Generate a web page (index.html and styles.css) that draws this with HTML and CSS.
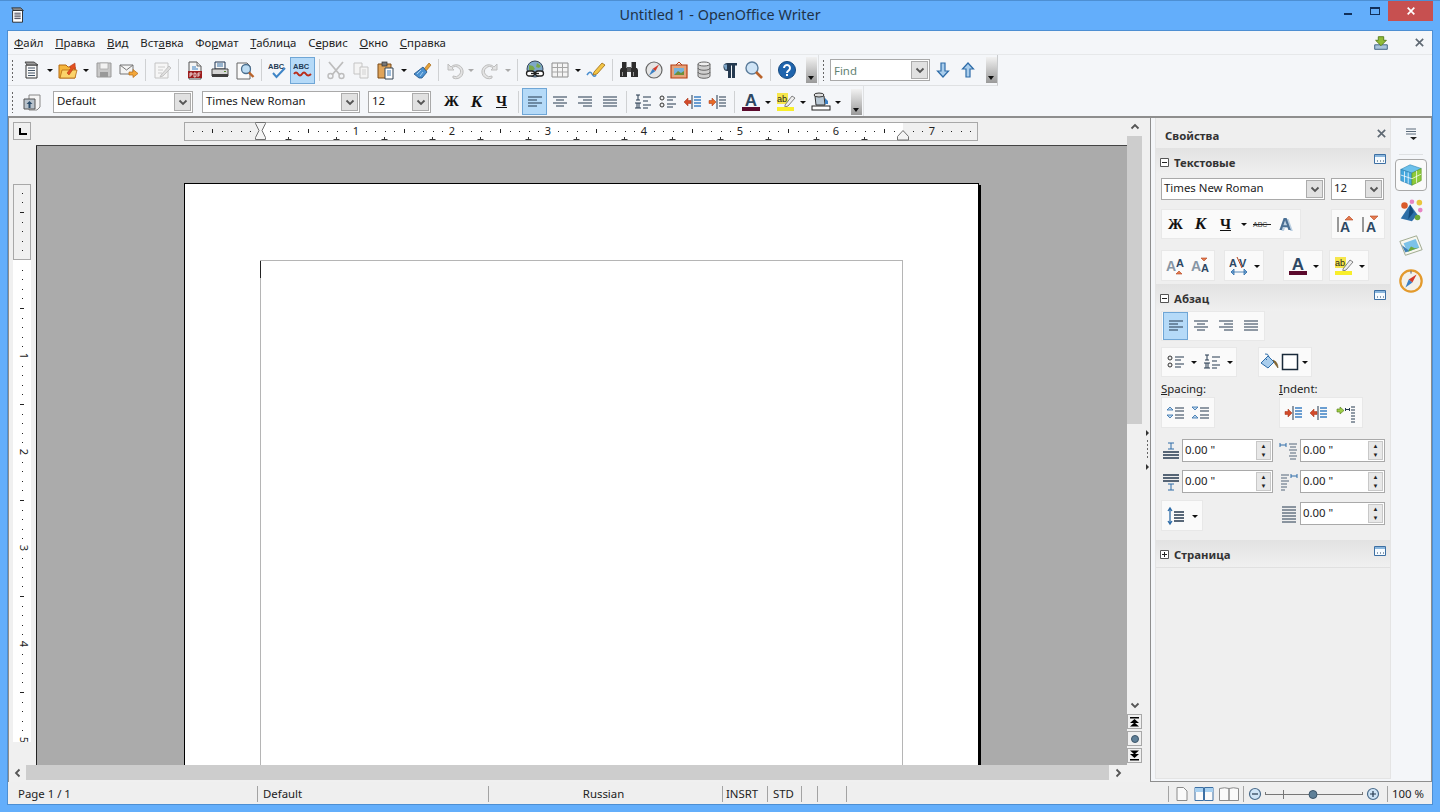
FILE: index.html
```html
<!DOCTYPE html>
<html lang="ru">
<head>
<meta charset="utf-8">
<title>Untitled 1 - OpenOffice Writer</title>
<link rel="stylesheet" href="styles.css">
</head>
<body>
<svg class="defs" xmlns="http://www.w3.org/2000/svg">
  <pattern id="tickh" width="96" height="18" patternUnits="userSpaceOnUse" x="260" y="0">
    <g fill="#222"><rect x="10" y="9" width="1" height="1"/><rect x="19" y="9" width="1" height="1"/><rect x="29" y="9" width="1" height="1"/><rect x="38" y="9" width="1" height="1"/><rect x="48" y="7" width="1" height="4"/><rect x="58" y="9" width="1" height="1"/><rect x="67" y="9" width="1" height="1"/><rect x="77" y="9" width="1" height="1"/><rect x="86" y="9" width="1" height="1"/></g>
  </pattern>
  <pattern id="tickv" width="18" height="96" patternUnits="userSpaceOnUse" x="0" y="18">
    <g fill="#222"><rect x="9" y="10" width="1" height="1"/><rect x="9" y="19" width="1" height="1"/><rect x="9" y="29" width="1" height="1"/><rect x="9" y="38" width="1" height="1"/><rect x="7" y="48" width="4" height="1"/><rect x="9" y="58" width="1" height="1"/><rect x="9" y="67" width="1" height="1"/><rect x="9" y="77" width="1" height="1"/><rect x="9" y="86" width="1" height="1"/></g>
  </pattern>
  <symbol id="arr" viewBox="0 0 8 20"><path d="M1 9h6l-3 3z" fill="#111"/></symbol>
  <symbol id="arrg" viewBox="0 0 8 20"><path d="M1 9h6l-3 3z" fill="#aaa"/></symbol>
  <symbol id="chev" viewBox="0 0 10 10"><path d="M1.500 3.500 5 7l3.500-3.500" fill="none" stroke="#555" stroke-width="1.800"/></symbol>
  <symbol id="xmark" viewBox="0 0 12 12"><path d="M2 2l8 8M10 2l-8 8" fill="none" stroke="#5f6973" stroke-width="1.800"/></symbol>
  <symbol id="xwhite" viewBox="0 0 12 12"><path d="M2 2l8 8M10 2l-8 8" fill="none" stroke="#fff" stroke-width="2"/></symbol>
  <symbol id="navup" viewBox="0 0 11 11"><path d="M1 1h9v1.500H1zM5.500 3 10 7H1zM5.500 6.500 10 10.500H1z" fill="#000"/></symbol>
  <symbol id="navdn" viewBox="0 0 11 11"><path d="M1 9h9v1.500H1zM5.500 8 10 4H1zM5.500 4.500 10 .5H1z" fill="#000"/></symbol>
  <symbol id="appdoc" viewBox="0 0 20 20"><path d="M4 5h11v13H4z" fill="#fff" stroke="#222"/><path d="M3 2h10l3 3H5z" fill="#8a8a8a" stroke="#222" stroke-width=".8"/><path d="M6 8h7M6 10h7M6 12h7M6 14h7" stroke="#334"/></symbol>
  <symbol id="new" viewBox="0 0 20 20"><path d="M4 5h11v13H4z" fill="#f8f8f8" stroke="#333"/><path d="M3 2h9l4 3H5z" fill="#9a9a9a" stroke="#333" stroke-width=".8"/><path d="M6 8h7M6 10.500h7M6 13h7M6 15.500h7" stroke="#456"/></symbol>
  <symbol id="open" viewBox="0 0 20 20"><path d="M1 5h7l2 2h7v11H1z" fill="#f6b73c" stroke="#b56a10"/><path d="M2 18 4 10h15l-2 8z" fill="#fbd36a" stroke="#b56a10" stroke-width=".8"/><path d="M9 13 13 8 11.500 6.500 17 3 17.500 9.500 15.500 8.500 11 15z" fill="#e3501f" stroke="#a83010" stroke-width=".5"/></symbol>
  <symbol id="save" viewBox="0 0 20 20"><path d="M3 3h14v14H3z" fill="#c8c8c8" stroke="#9a9a9a"/><path d="M6 3h8v6H6z" fill="#f2f2f2" stroke="#aaa" stroke-width=".8"/><path d="M6 12h8v5H6z" fill="#999"/></symbol>
  <symbol id="mail" viewBox="0 0 20 20"><path d="M1 5h13v9H1z" fill="#f4f4f4" stroke="#777"/><path d="M1 5l6.500 5L14 5" fill="none" stroke="#777"/><path d="M10 12h4V9.500l5 4-5 4V15h-4z" fill="#f3a73a" stroke="#b46a15" stroke-width=".7"/></symbol>
  <symbol id="edit" viewBox="0 0 20 20"><path d="M3 3h13v15H3z" fill="#f6f6f6" stroke="#c4c4c4"/><path d="M6 7h7M6 10h5M6 13h4" stroke="#ccc"/><path d="M9 15l8-9 2 2-8 8-3 1z" fill="#dedede" stroke="#bbb" stroke-width=".8"/></symbol>
  <symbol id="pdf" viewBox="0 0 20 20"><path d="M4 2h8l4 4v13H4z" fill="#f4f4f4" stroke="#555"/><path d="M12 2v4h4" fill="#ddd" stroke="#555" stroke-width=".8"/><path d="M7 7h4M7 9h6" stroke="#3b7fc0" stroke-width="1.200"/><path d="M3 11h14v7H3z" fill="#9c1d1d"/><path d="M5 13v4M5 13h2v2H5M9 13v4h1.500l.5-1v-2l-.5-1zM13 13v4M13 13h2.500M13 15h2" stroke="#fff" stroke-width=".8" fill="none"/></symbol>
  <symbol id="print" viewBox="0 0 20 20"><path d="M5 2h10v7H5z" fill="#f6f6f6" stroke="#1d3350"/><path d="M7 4h6M7 6h6" stroke="#3973a8"/><path d="M2 9h16v7H2z" fill="#d6d6d6" stroke="#444"/><path d="M2 14h16v3H2z" fill="#3e3e3e"/><rect x="14" y="11" width="2" height="1" fill="#5a8a33"/></symbol>
  <symbol id="preview" viewBox="0 0 20 20"><path d="M2 3h10l3 3v13H2z" fill="#fafafa" stroke="#666"/><circle cx="11" cy="9" r="4.500" fill="#bcdcf3" stroke="#4b6f8f" stroke-width="1.300"/><path d="M14 12.500 18.500 17" stroke="#b9622a" stroke-width="2.400"/></symbol>
  <symbol id="cut" viewBox="0 0 20 20"><path d="M3 2l11 13M17 2 6 15" stroke="#bdbdbd" stroke-width="1.800" fill="none"/><circle cx="4.500" cy="16" r="2.500" fill="none" stroke="#bdbdbd" stroke-width="1.400"/><circle cx="15.500" cy="16" r="2.500" fill="none" stroke="#bdbdbd" stroke-width="1.400"/></symbol>
  <symbol id="copy" viewBox="0 0 20 20"><path d="M3 3h8v11H3z" fill="#f4f4f4" stroke="#c4c4c4"/><path d="M9 7h8v11H9z" fill="#f4f4f4" stroke="#c4c4c4"/><path d="M11 10h4M11 12h4M11 14h4" stroke="#d2d2d2"/></symbol>
  <symbol id="paste" viewBox="0 0 20 20"><path d="M2 4h13v14H2z" fill="#dfa45a" stroke="#7a4a16"/><rect x="6" y="2" width="5" height="4" fill="#777" stroke="#333" stroke-width=".7"/><path d="M9 8h8v11H9z" fill="#fff" stroke="#345"/><path d="M11 11h4M11 13h4M11 15h4" stroke="#3a78b5"/></symbol>
  <symbol id="brush" viewBox="0 0 20 20"><path d="M12 9 17 3l2 2-5 6z" fill="#e6a33b" stroke="#a4691b" stroke-width=".7"/><path d="M11 7l4 5-5 6H7L2 14z" fill="#4a90cf" stroke="#1e4f84" stroke-width=".8"/><path d="M5 14l4-4M8 16l3-4" stroke="#a9d0f0"/></symbol>
  <symbol id="undo" viewBox="0 0 20 20"><path d="M3 4v6h6L7 8a5 5 0 1 1 1 8v2a7 7 0 1 0-2-11z" fill="#e3e3e3" stroke="#bdbdbd"/></symbol>
  <symbol id="redo" viewBox="0 0 20 20"><path d="M17 4v6h-6l2-2a5 5 0 1 0-1 8v2a7 7 0 1 1 2-11z" fill="#e3e3e3" stroke="#bdbdbd"/></symbol>
  <symbol id="link" viewBox="0 0 20 20"><circle cx="10" cy="9" r="8" fill="#7fa8c8" stroke="#37475a"/><path d="M4 5l4 1 2 3-3 2-3-1zM12 3l4 3-2 2-3-1z" fill="#79a84a"/><rect x="1.500" y="11" width="8" height="5" rx="2.500" fill="#fff" stroke="#222" stroke-width="1.300"/><rect x="10.500" y="11" width="8" height="5" rx="2.500" fill="#fff" stroke="#222" stroke-width="1.300"/><path d="M6 13.500h8" stroke="#222" stroke-width="1.300"/></symbol>
  <symbol id="table" viewBox="0 0 20 20"><path d="M2 3h16v14H2z" fill="#f4f4f4" stroke="#8c8c8c"/><path d="M2 7.500h16M2 12h16M7.500 3v14M12.500 3v14" stroke="#a6a6a6"/></symbol>
  <symbol id="draw" viewBox="0 0 20 20"><path d="M1 15q3-5 5-1t4 1" fill="none" stroke="#4a8ed0" stroke-width="1.600"/><path d="M8 12 16 3l3 2-8 9-4 1z" fill="#f3c545" stroke="#9a6a14" stroke-width=".8"/></symbol>
  <symbol id="find" viewBox="0 0 20 20"><path d="M2 8h6v9H1V10zM12 8h6l1 2v7h-7z" fill="#2d2d2d"/><rect x="3" y="2" width="4.500" height="7" fill="#2d2d2d"/><rect x="12.500" y="2" width="4.500" height="7" fill="#2d2d2d"/><rect x="8" y="7" width="4" height="5" fill="#555"/><path d="M3.500 12v4M14.500 12v4" stroke="#999"/></symbol>
  <symbol id="nav" viewBox="0 0 20 20"><circle cx="10" cy="10" r="8" fill="#e4e4e4" stroke="#666" stroke-width="1.200"/><path d="M15 4.500 11.500 11 8.500 9z" fill="#d23b2a"/><path d="M5 15.500 8.500 9 11.500 11z" fill="#3c80c4"/></symbol>
  <symbol id="gallery" viewBox="0 0 20 20"><path d="M2 5h16v13H2z" fill="#e5a37a" stroke="#b53f15" stroke-width="1.200"/><path d="M5 8h10v7H5z" fill="#76b3dc"/><path d="M5 15l4-4 3 2 3-2v4z" fill="#6e8f3a"/><path d="M7 5l3-3 3 3" fill="none" stroke="#b53f15"/></symbol>
  <symbol id="db" viewBox="0 0 20 20"><path d="M4 4v12c0 3 12 3 12 0V4z" fill="#cfcfcf" stroke="#666"/><ellipse cx="10" cy="4" rx="6" ry="2" fill="#efefef" stroke="#666"/><path d="M4 8c0 3 12 3 12 0M4 12c0 3 12 3 12 0" fill="none" stroke="#666"/></symbol>
  <symbol id="pil" viewBox="0 0 20 20"><path d="M8 3h10v2.500h-2V18h-3V5.500h-1V18H9v-7a4 4 0 0 1-1-8z" fill="#24394f"/><path d="M4.500 4.500H8v5H6z" fill="#7ea6c8"/></symbol>
  <symbol id="zoom" viewBox="0 0 20 20"><circle cx="8" cy="8" r="6" fill="#cfe4f6" stroke="#5b7c9b" stroke-width="1.400"/><path d="M12 12l6 6" stroke="#b9622a" stroke-width="2.600"/></symbol>
  <symbol id="help" viewBox="0 0 20 20"><circle cx="10" cy="10" r="8.500" fill="#1f64ad" stroke="#174a80"/><path d="M7 8a3 3 0 1 1 4.500 2.600c-1 .6-1.500 1-1.500 2.400" fill="none" stroke="#fff" stroke-width="2"/><rect x="9" y="14" width="2" height="2" fill="#fff"/></symbol>
  <symbol id="down" viewBox="0 0 20 20"><path d="M8 3h4v8h3.500L10 17l-5.500-6H8z" fill="#a9cdec" stroke="#2e6ca8" stroke-width="1.200"/></symbol>
  <symbol id="up" viewBox="0 0 20 20"><path d="M8 17h4V9h3.500L10 3 4.500 9H8z" fill="#a9cdec" stroke="#2e6ca8" stroke-width="1.200"/></symbol>
  <symbol id="style" viewBox="0 0 20 20"><path d="M7 3h11v12l-3 3H7z" fill="#f5f5f5" stroke="#888"/><path d="M2 7h11v10H2z" fill="#b9c3cc" stroke="#555"/><path d="M7.500 9l-3 3h2v4h2v-4h2z" fill="#2e4f6d"/></symbol>
  <symbol id="al" viewBox="0 0 20 20"><path d="M3 5h14M3 8h9M3 11h14M3 14h9" stroke="#24394f" stroke-width="1.200"/></symbol>
  <symbol id="ac" viewBox="0 0 20 20"><path d="M3 5h14M6 8h8M3 11h14M6 14h8" stroke="#24394f" stroke-width="1.200"/></symbol>
  <symbol id="ar" viewBox="0 0 20 20"><path d="M3 5h14M8 8h9M3 11h14M8 14h9" stroke="#24394f" stroke-width="1.200"/></symbol>
  <symbol id="aj" viewBox="0 0 20 20"><path d="M3 5h14M3 8h14M3 11h14M3 14h14" stroke="#24394f" stroke-width="1.200"/></symbol>
  <symbol id="num" viewBox="0 0 20 20"><path d="M3 3h4M5 3v5M3 8h4M2 11h6M4 11v5M6 11v5M2 16h6" stroke="#24394f" fill="none"/><path d="M10 5h8M10 9h5M10 13h8M10 16h5" stroke="#24394f" stroke-width="1.200"/></symbol>
  <symbol id="bul" viewBox="0 0 20 20"><circle cx="4" cy="6" r="2" fill="#eee" stroke="#333"/><circle cx="4" cy="13" r="2" fill="#eee" stroke="#333"/><path d="M9 5h9M9 8h6M9 12h9M9 15h6" stroke="#24394f" stroke-width="1.200"/></symbol>
  <symbol id="outd" viewBox="0 0 20 20"><path d="M9 3v14" stroke="#24394f"/><path d="M11 5h7M11 8h7M11 11h7M11 14h7" stroke="#3c80c4" stroke-width="1.300"/><path d="M1 10l4-4v2.500h3v3H5V14z" fill="#d24a2a" stroke="#a33015" stroke-width=".5"/></symbol>
  <symbol id="ind" viewBox="0 0 20 20"><path d="M9 3v14" stroke="#24394f"/><path d="M11 5h7M11 8h7M11 11h7M11 14h7" stroke="#24394f" stroke-width="1.200"/><path d="M8 10 4 6v2.500H1v3h3V14z" fill="#e86a25" stroke="#a33015" stroke-width=".5"/></symbol>
  <symbol id="indb" viewBox="0 0 20 20"><path d="M9 3v14" stroke="#24394f"/><path d="M11 5h7M11 8h7M11 11h7M11 14h7" stroke="#3c80c4" stroke-width="1.300"/><path d="M8 10 4 6v2.500H1v3h3V14z" fill="#d24a2a" stroke="#a33015" stroke-width=".5"/></symbol>
  <symbol id="bg" viewBox="0 0 20 20"><path d="M4 4h9l1 9H5z" fill="#b9c8d4" stroke="#333"/><ellipse cx="8" cy="3" rx="5" ry="2" fill="#ddd" stroke="#333"/><path d="M14 6l3 3v3h-3z" fill="#3c80c4"/><rect x="1" y="14" width="18" height="4" fill="#fff" stroke="#222"/></symbol>
  <symbol id="ext" viewBox="0 0 20 20"><path d="M3 12h14v5H3z" fill="#a8c4dc" stroke="#345a7c"/><path d="M7 3h6v4h3l-6 6-6-6h3z" fill="#8fbb37" stroke="#557a1a"/></symbol>
  <symbol id="fill" viewBox="0 0 20 20"><path d="M1 11 8 4l6 6-6 6z" fill="#a9cdec" stroke="#2e6ca8"/><path d="M5 2q3-1 4 3M6 7l1 1" fill="none" stroke="#2e6ca8"/><path d="M13 8q5 2 5 8l-3-4z" fill="#8c6a30" stroke="#5a4010" stroke-width=".5"/></symbol>
  <symbol id="box" viewBox="0 0 20 20"><rect x="2.500" y="2.500" width="15" height="15" fill="#fff" stroke="#1a2a3a" stroke-width="1.500"/></symbol>
  <symbol id="sp1" viewBox="0 0 20 20"><path d="M1 7l3-3 3 3zM1 12l3 3 3-3z" fill="#bfd8ee" stroke="#2e6ca8" stroke-width=".8"/><path d="M9 5h9M9 8h9M9 12h9M9 15h9" stroke="#24394f" stroke-width="1.100"/></symbol>
  <symbol id="sp2" viewBox="0 0 20 20"><path d="M1 4l3 3 3-3zM1 15l3-3 3 3z" fill="#bfd8ee" stroke="#2e6ca8" stroke-width=".8"/><path d="M9 5h9M9 8h9M9 12h9M9 15h9" stroke="#24394f" stroke-width="1.100"/></symbol>
  <symbol id="hang" viewBox="0 0 20 20"><path d="M1 6h3V4l4 3.500L4 11V9H1z" fill="#9ccd45" stroke="#557a1a" stroke-width=".6"/><path d="M9.500 5v3M9.500 6.500h4M13.500 5v3" stroke="#24394f" fill="none"/><path d="M15 4h4M15 7h4M15 10h4M15 13h4M15 16h4M15 19h4" stroke="#24394f"/></symbol>
  <symbol id="lnb" viewBox="0 0 20 20"><path d="M7 2h6M10 2v6M7 8h6" stroke="#2e6ca8" fill="none"/><path d="M2 11h16M2 14h16M2 17h16" stroke="#24394f" stroke-width="1.400"/></symbol>
  <symbol id="lna" viewBox="0 0 20 20"><path d="M2 3h16M2 6h16M2 9h16" stroke="#24394f" stroke-width="1.400"/><path d="M7 12h6M10 12v6M7 18h6" stroke="#2e6ca8" fill="none"/></symbol>
  <symbol id="ibefore" viewBox="0 0 20 20"><path d="M1 4h6M1 2v4M7 2v4" stroke="#2e6ca8" fill="none"/><path d="M10 3h8M11 6h6M10 9h8M11 12h6M10 15h8M11 18h6" stroke="#55667a" stroke-width="1.200"/></symbol>
  <symbol id="iafter" viewBox="0 0 20 20"><path d="M2 3h8M2 6h6M2 9h8M2 12h6M2 15h6M2 18h4" stroke="#55667a" stroke-width="1.200"/><path d="M12 4h6M12 2v4M18 2v4" stroke="#2e6ca8" fill="none"/></symbol>
  <symbol id="lsp" viewBox="0 0 20 20"><path d="M4 3v14M2 5l2-3 2 3M2 15l2 3 2-3" fill="none" stroke="#2e6ca8" stroke-width="1.300"/><path d="M8 6h10M8 9h10M8 12h10M8 15h10" stroke="#24394f" stroke-width="1.300"/></symbol>
  <symbol id="pgsp" viewBox="0 0 20 20"><path d="M3 3h14M3 6h14M3 9h14" stroke="#24394f"/><path d="M3 12h14M3 15h14M3 18h14" stroke="#24394f"/></symbol>
  <symbol id="optn" viewBox="0 0 12 12"><path d="M.5 1.500h11v9H.5z" fill="#f6fbff" stroke="#3c6fa3"/><path d="M1 2h10v2H1z" fill="#8ab6dd"/><path d="M3 8h1M6 8h1M9 8h1" stroke="#25466b"/></symbol>
  <symbol id="tprop" viewBox="0 0 28 28"><path d="M3 8 13 3l12 4-10 5z" fill="#6cc1ec" stroke="#3a8db8" stroke-width=".7"/><path d="M3 8l12 4v13L3 20z" fill="#45a8de" stroke="#2b7fb0" stroke-width=".7"/><path d="M15 12l10-5v13l-10 5z" fill="#8ecb3a" stroke="#5d9620" stroke-width=".7"/><path d="M7 10v12M11 11.300v12M3 14l12 4M20 9.500v13M15 18l10-5" stroke="#fff" stroke-width=".8"/></symbol>
  <symbol id="tstyle" viewBox="0 0 28 28"><path d="M3 22 13 7l8 11-6 7z" fill="#2e6fa8"/><path d="M13 7l4 8-6 8z" fill="#124a7c"/><circle cx="7" cy="8" r="3.500" fill="#d95a2a"/><circle cx="15" cy="4" r="2.500" fill="#e785c4"/><circle cx="23" cy="5" r="3" fill="#e9c63d"/><circle cx="24" cy="13" r="2.500" fill="#e785c4"/><circle cx="21" cy="21" r="3" fill="#6ea83a"/></symbol>
  <symbol id="tgal" viewBox="0 0 28 28"><path d="M2 9 20 3l6 15-18 6z" fill="#f7f7ef" stroke="#9aa58a"/><path d="M6 11 19 6.500l4 9.500-13 4.500z" fill="#7cc2e8"/><path d="M10 20.500l4-6 4 2 5-1z" fill="#6ea83a"/><path d="M4 13l8 6-4 2z" fill="#3e7fb6"/></symbol>
  <symbol id="tnav" viewBox="0 0 28 28"><circle cx="14" cy="14" r="11.500" fill="#f3f1ea" stroke="#e39a2c" stroke-width="2.400"/><path d="M20 7 15.500 15.500 11.500 12.500z" fill="#d23b2a"/><path d="M8 21l3.500-8.500 4 3z" fill="#3c80c4"/><path d="M14 3v3" stroke="#456"/></symbol>
  <symbol id="tmenu" viewBox="0 0 14 14"><path d="M1 2h10M1 4.500h10M1 7h10" stroke="#5a6a7a"/><path d="M5 10h7l-3.500 3z" fill="#222"/></symbol>
  <symbol id="pg1" viewBox="0 0 16 16"><path d="M3 1.500h6.500L13 5v9.500H3z" fill="#fafafa" stroke="#8a8a8a"/></symbol>
  <symbol id="pg2" viewBox="0 0 20 16"><path d="M1 1.500h8.500v13H1zM10.500 1.500H19v13h-8.500z" fill="#fafafa" stroke="#3c6fa3"/><path d="M1 2h8v4H1zM11 2h8v4h-8z" fill="#a8d0f0"/></symbol>
  <symbol id="pg3" viewBox="0 0 22 16"><path d="M1.500 2.500Q7 1 11 2.500v12H1.500zM11 2.500q4-1.500 9.500 0v12H11z" fill="#fafafa" stroke="#8a8a8a"/></symbol>
  <symbol id="zmin" viewBox="0 0 14 14"><circle cx="7" cy="7" r="5.500" fill="#cfe4f6" stroke="#4a6b8a" stroke-width="1.200"/><path d="M4 7h6" stroke="#24394f" stroke-width="1.200"/></symbol>
  <symbol id="zplus" viewBox="0 0 14 14"><circle cx="7" cy="7" r="5.500" fill="#cfe4f6" stroke="#4a6b8a" stroke-width="1.200"/><path d="M4 7h6M7 4v6" stroke="#24394f" stroke-width="1.200"/></symbol>
  <symbol id="minusb" viewBox="0 0 9 9"><path d="M.5.500h8v8h-8z" fill="#fff" stroke="#555"/><path d="M2 4.500h5" stroke="#222"/></symbol>
  <symbol id="plusb" viewBox="0 0 9 9"><path d="M.5.500h8v8h-8z" fill="#fff" stroke="#555"/><path d="M2 4.500h5M4.500 2v5" stroke="#222"/></symbol>
</svg>

<div class="window">
  <header class="titlebar">
    <svg class="appicon"><use href="#appdoc"/></svg>
    <div class="title">Untitled 1 - OpenOffice Writer</div>
    <div class="controls">
      <span class="ctl-min"></span>
      <span class="ctl-max"></span>
      <span class="ctl-close"><svg class="x-close"><use href="#xwhite"/></svg></span>
    </div>
  </header>

  <div class="client">
    <nav class="menubar">
      <span><u>Ф</u>айл</span><span><u>П</u>равка</span><span><u>В</u>ид</span><span>Вст<u>а</u>вка</span><span>Фо<u>р</u>мат</span><span><u>Т</u>аблица</span><span>С<u>е</u>рвис</span><span><u>О</u>кно</span><span><u>С</u>правка</span>
      <span class="menu-right"><svg class="ext-i"><use href="#ext"/></svg><svg class="menu-x"><use href="#xmark"/></svg></span>
    </nav>

    <div class="toolbar tb1">
      <div class="tbgroup">
        <span class="grip"></span>
        <span class="b"><svg class="i"><use href="#new"/></svg></span><span class="a"><svg class="ar8"><use href="#arr"/></svg></span>
        <span class="b"><svg class="i"><use href="#open"/></svg></span><span class="a"><svg class="ar8"><use href="#arr"/></svg></span>
        <span class="b"><svg class="i"><use href="#save"/></svg></span>
        <span class="b"><svg class="i"><use href="#mail"/></svg></span><span class="s"></span>
        <span class="b"><svg class="i"><use href="#edit"/></svg></span><span class="s"></span>
        <span class="b"><svg class="i"><use href="#pdf"/></svg></span>
        <span class="b"><svg class="i"><use href="#print"/></svg></span>
        <span class="b"><svg class="i"><use href="#preview"/></svg></span><span class="s"></span>
        <span class="b"><svg class="i" viewBox="0 0 20 20"><text x="0" y="9" class="mini" fill="#243a55">ABC</text><path d="M5 13l3.500 4L17 8" fill="none" stroke="#3f85c7" stroke-width="2"/></svg></span>
        <span class="b on"><svg class="i" viewBox="0 0 20 20"><text x="0" y="9" class="mini" fill="#243a55">ABC</text><path d="M1 14q2-3 4 0t4 0 4 0 5 0" fill="none" stroke="#b92d1a" stroke-width="2"/></svg></span><span class="s"></span>
        <span class="b"><svg class="i"><use href="#cut"/></svg></span>
        <span class="b"><svg class="i"><use href="#copy"/></svg></span>
        <span class="b"><svg class="i"><use href="#paste"/></svg></span><span class="a"><svg class="ar8"><use href="#arr"/></svg></span>
        <span class="b"><svg class="i"><use href="#brush"/></svg></span><span class="s"></span>
        <span class="b"><svg class="i"><use href="#undo"/></svg></span><span class="a narrow"><svg class="ar8"><use href="#arrg"/></svg></span>
        <span class="b lead2"><svg class="i"><use href="#redo"/></svg></span><span class="a"><svg class="ar8"><use href="#arrg"/></svg></span><span class="s"></span>
        <span class="b lead1"><svg class="i"><use href="#link"/></svg></span>
        <span class="b"><svg class="i"><use href="#table"/></svg></span><span class="a"><svg class="ar8"><use href="#arr"/></svg></span>
        <span class="b"><svg class="i"><use href="#draw"/></svg></span><span class="s"></span>
        <span class="b"><svg class="i"><use href="#find"/></svg></span>
        <span class="b"><svg class="i"><use href="#nav"/></svg></span>
        <span class="b"><svg class="i"><use href="#gallery"/></svg></span>
        <span class="b"><svg class="i"><use href="#db"/></svg></span>
        <span class="b"><svg class="i"><use href="#pil"/></svg></span>
        <span class="b"><svg class="i"><use href="#zoom"/></svg></span><span class="s"></span>
        <span class="b"><svg class="i"><use href="#help"/></svg></span>
        <span class="over o1"></span>
      </div>
      <div class="tbgroup findbar">
        <span class="grip"></span>
        <div class="combo c-find"><span class="ctext find">Find</span><span class="cbtn"><svg class="ch"><use href="#chev"/></svg></span></div>
        <span class="b"><svg class="i"><use href="#down"/></svg></span>
        <span class="b"><svg class="i"><use href="#up"/></svg></span>
        <span class="over o2"></span>
      </div>
    </div>

    <div class="toolbar tb2">
      <div class="tbgroup">
        <span class="grip"></span>
        <span class="b"><svg class="i"><use href="#style"/></svg></span>
        <div class="combo c-style"><span class="ctext">Default</span><span class="cbtn"><svg class="ch"><use href="#chev"/></svg></span></div>
        <div class="combo c-font"><span class="ctext">Times New Roman</span><span class="cbtn"><svg class="ch"><use href="#chev"/></svg></span></div>
        <div class="combo c-size"><span class="ctext">12</span><span class="cbtn"><svg class="ch"><use href="#chev"/></svg></span></div>
        <span class="b fmt f-b">Ж</span><span class="b fmt f-i">К</span><span class="b fmt f-u">Ч</span><span class="s"></span>
        <span class="b on"><svg class="i"><use href="#al"/></svg></span>
        <span class="b"><svg class="i"><use href="#ac"/></svg></span>
        <span class="b"><svg class="i"><use href="#ar"/></svg></span>
        <span class="b"><svg class="i"><use href="#aj"/></svg></span><span class="s"></span>
        <span class="b"><svg class="i"><use href="#num"/></svg></span>
        <span class="b"><svg class="i"><use href="#bul"/></svg></span>
        <span class="b"><svg class="i"><use href="#outd"/></svg></span>
        <span class="b"><svg class="i"><use href="#ind"/></svg></span><span class="s"></span>
        <span class="b"><svg class="i" viewBox="0 0 20 20"><text x="10" y="14" class="bigA" text-anchor="middle" fill="#2d4864">A</text><rect x="1" y="15" width="18" height="4" fill="#5b0a2c"/></svg></span><span class="a a10"><svg class="ar8"><use href="#arr"/></svg></span>
        <span class="b"><svg class="i" viewBox="0 0 20 20"><rect x="1" y="1" width="11" height="11" fill="#f6e64c"/><text x="1" y="10" class="mini2" fill="#222">ab</text><path d="M9 13 16 4l3 2-7 8-3 1z" fill="#eee" stroke="#666" stroke-width=".8"/><rect x="1" y="15" width="17" height="4" fill="#f8ee2a"/></svg></span><span class="a a10"><svg class="ar8"><use href="#arr"/></svg></span>
        <span class="b"><svg class="i"><use href="#bg"/></svg></span><span class="a a10"><svg class="ar8"><use href="#arr"/></svg></span>
        <span class="over o3"></span>
      </div>
    </div>

    <div class="workspace">
      <div class="docarea">
        <div class="corner"><span class="tabmark"></span></div>
        <div class="hruler">
          <svg class="rulersvg-h" viewBox="36 0 1091 28">
            <rect x="184.500" y="4.500" width="793" height="18" fill="#f0f0f0" stroke="#a8a8a8"/>
            <rect x="260" y="5" width="643" height="17" fill="#fff"/>
            <g transform="translate(0 4)"><rect x="184" y="0" width="793" height="18" fill="url(#tickh)"/></g>
            <g font-size="11" fill="#222" text-anchor="middle" class="rdigit"><rect x="350" y="6" width="12" height="14" fill="#fff"/><text x="356" y="17">1</text><rect x="446" y="6" width="12" height="14" fill="#fff"/><text x="452" y="17">2</text><rect x="542" y="6" width="12" height="14" fill="#fff"/><text x="548" y="17">3</text><rect x="638" y="6" width="12" height="14" fill="#fff"/><text x="644" y="17">4</text><rect x="734" y="6" width="12" height="14" fill="#fff"/><text x="740" y="17">5</text><rect x="830" y="6" width="12" height="14" fill="#fff"/><text x="836" y="17">6</text><rect x="926" y="6" width="12" height="14" fill="#f0f0f0"/><text x="932" y="17">7</text></g>
            <path d="M285.500 21v-2M282.500 21.500h6M333.500 21v-2M330.500 21.500h6M381.500 21v-2M378.500 21.500h6M429.500 21v-2M426.500 21.500h6M477.500 21v-2M474.500 21.500h6M525.500 21v-2M522.500 21.500h6M573.500 21v-2M570.500 21.500h6M621.500 21v-2M618.500 21.500h6M669.500 21v-2M666.500 21.500h6M717.500 21v-2M714.500 21.500h6M765.500 21v-2M762.500 21.500h6M813.500 21v-2M810.500 21.500h6M861.500 21v-2M858.500 21.500h6" stroke="#333" transform="translate(3 0)"/>
            <path d="M255.500 4.500h10v1l-3.500 7 3.500 7v2h-10v-2l3.500-7-3.500-7z" fill="#f4f4f4" stroke="#707070"/>
            <path d="M903 12.500l5.500 6v3.500h-11v-3.500z" fill="#f4f4f4" stroke="#707070"/>
          </svg>
        </div>
        <div class="vscroll">
          <span class="sc-btn"><svg class="ch flip-u"><use href="#chev"/></svg></span>
          <span class="sc-thumb"></span>
          <span class="sc-fill"></span>
          <span class="sc-btn"><svg class="ch"><use href="#chev"/></svg></span>
          <span class="nav-btn"><svg class="nav-i"><use href="#navup"/></svg></span>
          <span class="nav-btn n-mid"><span class="nav-dot"></span></span>
          <span class="nav-btn"><svg class="nav-i"><use href="#navdn"/></svg></span>
        </div>
        <div class="vruler">
          <svg class="rulersvg-v" viewBox="0 0 18 596">
            <rect x=".5" y="38.500" width="17" height="75" fill="#f0f0f0" stroke="#a8a8a8"/>
            <rect x="0" y="114" width="18" height="482" fill="#fff"/>
            <rect x="0" y="38" width="18" height="558" fill="url(#tickv)"/>
            <g font-size="11" fill="#222" text-anchor="middle" class="rdigit">
              <rect x="3" y="204" width="12" height="12" fill="#fff"/><text transform="translate(7 210) rotate(90)">1</text>
              <rect x="3" y="300" width="12" height="12" fill="#fff"/><text transform="translate(7 306) rotate(90)">2</text>
              <rect x="3" y="396" width="12" height="12" fill="#fff"/><text transform="translate(7 402) rotate(90)">3</text>
              <rect x="3" y="492" width="12" height="12" fill="#fff"/><text transform="translate(7 498) rotate(90)">4</text>
              <rect x="3" y="588" width="12" height="8" fill="#fff"/><text transform="translate(7 594) rotate(90)">5</text>
            </g>
          </svg>
        </div>
        <div class="canvas">
          <div class="page">
            <div class="frame"><div class="caret"></div></div>
          </div>
        </div>
        <div class="hscroll">
          <span class="sc-btn-h"><svg class="ch flip-l"><use href="#chev"/></svg></span>
          <span class="sc-thumb-h"></span>
          <span class="sc-btn-h"><svg class="ch flip-r"><use href="#chev"/></svg></span>
        </div>
      </div>

      <div class="splitter"><span class="tri"></span><span class="dots"></span><span class="tri"></span></div>

      <aside class="sidebar">
        <div class="deck">
          <div class="deck-title"><span>Свойства</span><svg class="deck-x"><use href="#xmark"/></svg></div>

          <div class="sec-head"><svg class="sec-box"><use href="#minusb"/></svg><span class="sec-name">Текстовые</span><svg class="sec-opt"><use href="#optn"/></svg></div>
          <div class="sec sec-text">
            <div class="row r-combo">
              <div class="combo c-sfont"><span class="ctext">Times New Roman</span><span class="cbtn"><svg class="ch"><use href="#chev"/></svg></span></div>
              <div class="combo c-ssize"><span class="ctext">12</span><span class="cbtn"><svg class="ch"><use href="#chev"/></svg></span></div>
            </div>
            <div class="row between r-2">
              <div class="grp"><span class="b fmt f-b">Ж</span><span class="b fmt f-i">К</span><span class="b fmt f-u">Ч</span><span class="a"><svg class="ar8"><use href="#arr"/></svg></span><span class="b"><svg class="i" viewBox="0 0 20 20"><text x="1" y="13" class="mini3" fill="#444">ABC</text><path d="M1 10.500h18" stroke="#222"/></svg></span><span class="b"><svg class="i" viewBox="0 0 20 20"><text x="2" y="16" class="bigA shadowed" fill="#4a6f94">A</text></svg></span></div>
              <div class="grp"><span class="b"><svg class="i" viewBox="0 0 20 20"><path d="M1 3h2v15H1z" fill="#999"/><text x="4" y="18" class="bigA2" fill="#2d4864">A</text><path d="M9 6l4-4 4 4z" fill="#e37b50" stroke="#b5431b" stroke-width=".6"/></svg></span><span class="b"><svg class="i" viewBox="0 0 20 20"><path d="M1 3h2v15H1z" fill="#999"/><text x="5" y="18" class="bigA2" fill="#2d4864">A</text><path d="M9 2l4 4 4-4z" fill="#e37b50" stroke="#b5431b" stroke-width=".6"/></svg></span></div>
            </div>
            <div class="row r-3">
              <div class="grp"><span class="b"><svg class="i" viewBox="0 0 20 20"><text x="0" y="15" class="bigA2" fill="#8796a5">A</text><text x="10" y="11" class="bigA2b" fill="#2d4864">A</text><path d="M10 18l3-3 3 3z" fill="#e37b50" stroke="#b5431b" stroke-width=".6"/></svg></span><span class="b"><svg class="i" viewBox="0 0 20 20"><text x="0" y="15" class="bigA2" fill="#8796a5">A</text><text x="10" y="16" class="bigA2b" fill="#2d4864">A</text><path d="M10 2l3 3 3-3z" fill="#e37b50" stroke="#b5431b" stroke-width=".6"/></svg></span></div>
              <div class="grp g-kern"><span class="b"><svg class="i" viewBox="0 0 20 20"><text x="0" y="11" class="bigA2b" fill="#2d4864">A</text><text x="10" y="11" class="bigA2b" fill="#2d4864">V</text><path d="M8 1l5 11" stroke="#b5431b"/><path d="M2 16h16M2 16l3-3v6zM18 16l-3-3v6z" fill="#86b4dc" stroke="#2e6ca8" stroke-width=".8"/></svg></span><span class="a"><svg class="ar8"><use href="#arr"/></svg></span></div>
              <div class="grp g-col"><span class="b"><svg class="i" viewBox="0 0 20 20"><text x="10" y="14" class="bigA" text-anchor="middle" fill="#2d4864">A</text><rect x="1" y="15" width="18" height="4" fill="#5b0a2c"/></svg></span><span class="a"><svg class="ar8"><use href="#arr"/></svg></span></div>
              <div class="grp g-hi"><span class="b"><svg class="i" viewBox="0 0 20 20"><rect x="1" y="1" width="11" height="11" fill="#f6e64c"/><text x="1" y="10" class="mini2" fill="#222">ab</text><path d="M9 13 16 4l3 2-7 8-3 1z" fill="#eee" stroke="#666" stroke-width=".8"/><rect x="1" y="15" width="17" height="4" fill="#f8ee2a"/></svg></span><span class="a"><svg class="ar8"><use href="#arr"/></svg></span></div>
            </div>
          </div>

          <div class="sec-head"><svg class="sec-box"><use href="#minusb"/></svg><span class="sec-name">Абзац</span><svg class="sec-opt"><use href="#optn"/></svg></div>
          <div class="sec sec-para">
            <div class="row"><div class="grp"><span class="b on"><svg class="i"><use href="#al"/></svg></span><span class="b"><svg class="i"><use href="#ac"/></svg></span><span class="b"><svg class="i"><use href="#ar"/></svg></span><span class="b"><svg class="i"><use href="#aj"/></svg></span></div></div>
            <div class="row r-list">
              <div class="grp"><span class="b"><svg class="i"><use href="#bul"/></svg></span><span class="a"><svg class="ar8"><use href="#arr"/></svg></span><span class="b"><svg class="i"><use href="#num"/></svg></span><span class="a"><svg class="ar8"><use href="#arr"/></svg></span></div>
              <div class="grp g-fill"><span class="b bw"><svg class="i"><use href="#fill"/></svg></span><span class="b bw2"><svg class="i"><use href="#box"/></svg></span><span class="a"><svg class="ar8"><use href="#arr"/></svg></span></div>
            </div>
            <div class="spacing">
              <div class="col"><div class="lbl"><u>S</u>pacing:</div><div class="grp"><span class="b"><svg class="i"><use href="#sp1"/></svg></span><span class="b"><svg class="i"><use href="#sp2"/></svg></span></div></div>
              <div class="col"><div class="lbl"><u>I</u>ndent:</div><div class="grp"><span class="b"><svg class="i"><use href="#indb"/></svg></span><span class="b"><svg class="i"><use href="#outd"/></svg></span><span class="b bw3"><svg class="i"><use href="#hang"/></svg></span></div></div>
            </div>
            <div class="spins">
              <div class="spinrow"><svg class="i"><use href="#lnb"/></svg><div class="spin s-l"><span class="ctext">0.00 "</span><span class="sbtn"><i>▲</i><i>▼</i></span></div></div>
              <div class="spinrow"><svg class="i"><use href="#ibefore"/></svg><div class="spin s-r"><span class="ctext">0.00 "</span><span class="sbtn"><i>▲</i><i>▼</i></span></div></div>
              <div class="spinrow"><svg class="i"><use href="#lna"/></svg><div class="spin s-l"><span class="ctext">0.00 "</span><span class="sbtn"><i>▲</i><i>▼</i></span></div></div>
              <div class="spinrow"><svg class="i"><use href="#iafter"/></svg><div class="spin s-r"><span class="ctext">0.00 "</span><span class="sbtn"><i>▲</i><i>▼</i></span></div></div>
              <div class="spinrow"><div class="grp g-lsp"><span class="b"><svg class="i"><use href="#lsp"/></svg></span><span class="a a13"><svg class="ar8"><use href="#arr"/></svg></span></div></div>
              <div class="spinrow sr-last"><svg class="i"><use href="#pgsp"/></svg><div class="spin s-r"><span class="ctext">0.00 "</span><span class="sbtn"><i>▲</i><i>▼</i></span></div></div>
            </div>
          </div>

          <div class="sec-head h-page"><svg class="sec-box"><use href="#plusb"/></svg><span class="sec-name">Страница</span><svg class="sec-opt"><use href="#optn"/></svg></div>
        </div>

        <div class="tabbar">
          <svg class="t-menu"><use href="#tmenu"/></svg>
          <span class="t-sep"></span>
          <span class="tab active"><svg class="t-i"><use href="#tprop"/></svg></span>
          <span class="tab"><svg class="t-i"><use href="#tstyle"/></svg></span>
          <span class="tab"><svg class="t-i"><use href="#tgal"/></svg></span>
          <span class="tab"><svg class="t-i"><use href="#tnav"/></svg></span>
        </div>
      </aside>
    </div>

    <footer class="statusbar">
      <span class="cell st-page">Page 1 / 1</span>
      <span class="cell st-style">Default</span>
      <span class="cell st-lang">Russian</span>
      <span class="cell st-ins">INSRT</span>
      <span class="cell st-std">STD</span>
      <span class="cell st-e1"></span>
      <span class="cell st-e2"></span>
      <span class="cell st-fill"></span>
      <span class="cell st-view"><svg class="v1"><use href="#pg1"/></svg><svg class="v2"><use href="#pg2"/></svg><svg class="v3"><use href="#pg3"/></svg></span>
      <span class="cell st-zoom"><svg class="z"><use href="#zmin"/></svg><svg class="slider" viewBox="0 0 98 14"><path d="M0 7.500h98" stroke="#777"/><path d="M.5 5v2M18.500 3v9M97.500 5v2" stroke="#777"/><circle cx="48" cy="7.500" r="4" fill="#5f8098" stroke="#3c5569"/></svg><svg class="z"><use href="#zplus"/></svg></span>
      <span class="cell st-pct">100 %</span>
    </footer>
  </div>
</div>
</body>
</html>
```

FILE: styles.css
```css
* { box-sizing: border-box; }
html, body { margin: 0; padding: 0; }
body { width: 1440px; height: 812px; overflow: hidden; font-family: "Noto Sans", "Open Sans", sans-serif; font-size: 11.4px; color: #222; }
.defs { display: block; width: 0; height: 0; }
.mini { font: bold 7.5px "Liberation Sans", sans-serif; }
.mini2 { font: 9px "Liberation Sans", sans-serif; }
.mini3 { font: 7px "Liberation Sans", sans-serif; }
.bigA { font: bold 17px "Liberation Sans", sans-serif; }
.bigA2 { font: bold 14px "Liberation Sans", sans-serif; }
.bigA2b { font: bold 11px "Liberation Sans", sans-serif; }
.shadowed { filter: drop-shadow(2px 1px 0 #bcd0e2); }

.window { width: 1440px; height: 812px; display: flex; flex-direction: column; background: #63aefb; border-top: 1px solid #4d8fd3; }
.titlebar { height: 29px; flex: none; display: flex; align-items: center; position: relative; }
.appicon { width: 18px; height: 18px; margin-left: 9px; margin-top: -1px; }
.title { position: absolute; left: 0; right: 0; top: 3px; text-align: center; font-size: 14.4px; color: #1f3247; line-height: 22px; }
.controls { margin-left: auto; display: flex; align-self: flex-start; margin-right: 7px; align-items: flex-start; height: 20px; position: relative; }
.ctl-min { width: 8px; height: 2px; background: #12305a; margin-right: 18px; margin-top: 12px; }
.ctl-max { width: 10px; height: 8px; border: 1px solid #12305a; border-top-width: 2px; margin-right: 8px; margin-top: 6px; }
.ctl-close { width: 45px; height: 20px; background: #c75050; display: flex; align-items: center; justify-content: center; }
.x-close { width: 10px; height: 10px; display: block; }

.client { flex: 1; min-height: 0; margin: 0 7px 7px; border: 1px solid #4d8fd3; background: #f4f6f9; display: flex; flex-direction: column; }
.menubar { height: 24px; flex: none; border-bottom: 1px solid #e6e8ea; display: flex; align-items: center; gap: 11.75px; padding-left: 6px; color: #222; }
.menu-right { margin-left: auto; display: flex; align-items: center; }
.ext-i { width: 18px; height: 18px; display: block; }
.menu-x { width: 11px; height: 11px; margin-left: 24px; margin-right: 7px; display: block; }

.toolbar { display: flex; flex: none; }
.tb1 { height: 31px; }
.tb2 { height: 30px; }
.tbgroup { display: flex; align-items: center; height: 100%; }
.tb1 .tbgroup { border-bottom: 1px solid #dfe1e3; }
.tb2 .tbgroup { border-right: 1px solid #dfe1e3; padding-top: 1px; }
.findbar { border-left: 1px solid #dfe1e3; border-right: 1px solid #c9cbcd; }
.grip { width: 11px; height: 22px; flex: none; background: radial-gradient(circle at center, #666 0 .7px, transparent .8px) 3px 0 / 3px 4px repeat-y; }
.b { width: 25px; height: 27px; flex: none; display: flex; align-items: center; justify-content: center; }
.i { width: 20px; height: 20px; display: block; flex: none; }
.a { width: 11px; height: 20px; flex: none; display: flex; justify-content: center; align-items: center; }
.a.narrow { width: 8px; }
.a.a10 { width: 10px; }
.a.a13 { width: 13px; }
.ar8 { width: 8px; height: 20px; display: block; }
.lead1 { margin-left: 1px; }
.lead2 { margin-left: 2px; }
.s { width: 8px; height: 22px; flex: none; position: relative; display: flex; justify-content: center; }
.s::before { content: ""; width: 1px; background: #cfd1d3; }
.on { border: 1px solid #6fa6d6; background-color: #b5daf8; background-image: radial-gradient(circle at center, #d8edfd 0 .6px, transparent .7px); background-size: 2px 2px; }
.over { width: 11px; height: 26px; flex: none; background: linear-gradient(#f1f1f1, #9a9a9a); position: relative; }
.over::after { content: ""; position: absolute; left: 2px; bottom: 3px; border: 3.5px solid transparent; border-top: 4px solid #111; border-bottom: 0; }
.o1 { margin-left: 7px; margin-right: 1px; }
.o2 { margin-left: 6px; }
.o3 { margin-left: 8px; margin-right: 1px; }

.combo { display: flex; align-items: stretch; background: #fff; border: 1px solid #a9a9a9; height: 22px; flex: none; }
.ctext { flex: 1; padding-left: 3px; line-height: 18px; white-space: nowrap; overflow: hidden; }
.find { color: #5f8272; line-height: 21px; }
.cbtn { width: 17px; margin: 1px; background: #e1e1e1; border: 1px solid #acacac; display: flex; align-items: center; justify-content: center; }
.ch { width: 10px; height: 10px; display: block; }
.flip-u { transform: rotate(180deg); }
.flip-l { transform: rotate(90deg); }
.flip-r { transform: rotate(-90deg); }
.c-find { width: 100px; }
.c-style { width: 140px; margin-left: 9px; }
.c-font { width: 158px; margin-left: 9px; }
.c-size { width: 63px; margin-left: 8px; margin-right: 8px; }
.fmt { font-family: "Liberation Serif", serif; font-weight: bold; font-size: 15px; color: #111; }
.f-i { font-style: italic; font-size: 17px; }
.f-u { text-decoration: underline; }

.workspace { flex: 1; min-height: 0; display: flex; border-top: 2px solid #8e8e8e; }
.docarea { width: 1136px; flex: none; display: grid; grid-template-columns: 27px 1091px 17px; grid-template-rows: 28px 619px 16px; border-left: 1px solid #8e8e8e; background: #f0f0f0; }
.corner { padding: 4px 0 0 4px; }
.tabmark { display: block; width: 18px; height: 18px; border: 1px solid #a8a8a8; position: relative; background: #f0f0f0; }
.tabmark::after { content: ""; position: absolute; left: 5px; top: 5px; width: 6px; height: 5px; border-left: 2px solid #000; border-bottom: 2px solid #000; }
.hruler { border-bottom: 1px solid #444; grid-column: 2; }
.rulersvg-h { display: block; width: 1091px; height: 28px; }
.rdigit { font-family: "Noto Sans", sans-serif; }
.vscroll { grid-column: 3; grid-row: 1 / span 2; display: flex; flex-direction: column; width: 17px; background: #f0f0f0; }
.sc-btn { height: 18px; flex: none; display: flex; align-items: center; justify-content: center; width: 15px; }
.sc-thumb { height: 288px; width: 15px; background: #cdcdcd; flex: none; }
.sc-fill { flex: 1; }
.nav-btn { width: 15px; height: 15px; border: 1px solid #a8a8a8; margin-bottom: 2px; flex: none; display: flex; align-items: center; justify-content: center; }
.nav-i { width: 11px; height: 11px; display: block; }
.nav-dot { width: 8px; height: 8px; border-radius: 50%; background: #5f8098; border: 1px solid #3c5569; }
.vruler { padding-left: 4px; grid-column: 1; grid-row: 2; }
.rulersvg-v { display: block; width: 18px; height: 596px; }
.canvas { grid-column: 2; grid-row: 2; background: #ababab; border-left: 1px solid #222; padding: 37px 0 0 147px; overflow: hidden; }
.page { width: 795px; height: 800px; background: #fff; border: 1px solid #000; box-shadow: 2px 2px 0 #000; padding: 76px 0 0 75px; }
.frame { width: 643px; height: 700px; border: 1px solid #b5b5b5; border-bottom: 0; }
.caret { width: 1px; height: 17px; background: #222; margin-left: -1px; }
.hscroll { grid-column: 1 / span 2; grid-row: 3; display: flex; align-items: stretch; background: #f0f0f0; }
.sc-btn-h { width: 17px; height: 15px; flex: none; display: flex; align-items: center; justify-content: center; }
.sc-thumb-h { width: 1083px; background: #cdcdcd; flex: none; height: 15px; }

.splitter { width: 6px; flex: none; display: flex; flex-direction: column; justify-content: center; align-items: center; background: #f0f0f0; }
.dots { width: 1px; height: 20px; background: repeating-linear-gradient(#666 0 2px, transparent 2px 4px); margin: 4px 0; }
.tri { display: block; width: 0; height: 0; border: 3px solid transparent; border-left: 3px solid #333; border-right: 0; }

.sidebar { width: 282px; flex: none; display: flex; background: #f4f6f9; border: 1px solid #8e8e8e; border-top: 0; padding-left: 4px; }
.deck { width: 236px; flex: none; background: #efefef; border: 1px solid #e4e4e4; border-top: 0; margin-bottom: 2px; display: flex; flex-direction: column; }
.deck-title { height: 30px; flex: none; display: flex; align-items: center; justify-content: space-between; padding: 4px 3px 0 9px; font-weight: bold; color: #333; }
.deck-x { width: 11px; height: 11px; display: block; margin-top: -3px; }
.sec-head { height: 27px; flex: none; display: flex; align-items: center; background: linear-gradient(#e2e2e2, #f0f0f0); padding: 2px 4px 0; font-weight: bold; color: #333; }
.sec-box { width: 9px; height: 9px; margin-right: 5px; flex: none; }
.sec-name { flex: 1; }
.sec-opt { width: 12px; height: 12px; flex: none; align-self: flex-start; margin-top: 3px; }
.h-page { border-bottom: 1px solid #e0e0e0; height: 28px; }
.sec { padding-left: 5px; display: flex; flex-direction: column; }
.sec .ctext { padding-left: 2px; }
.sec-text { height: 109px; padding-top: 3px; }
.sec-para { height: 229px; }
.row { display: flex; flex: none; }
.between { justify-content: space-between; padding-right: 5px; }
.r-combo { gap: 6px; }
.c-sfont { width: 164px; }
.c-ssize { width: 53px; }
.r-2 { margin-top: 9px; }
.r-3 { margin-top: 11px; }
.grp { display: flex; align-items: center; background: #fafafa; border: 1px solid #e8e8e8; padding: 0 1px; height: 30px; width: fit-content; flex: none; }
.r-3 .grp { height: 31px; }
.g-kern { margin-left: 9px; }
.g-col { margin-left: 19px; }
.g-hi { margin-left: 6px; }
.sec .on.b { height: 28px; }
.r-list { margin-top: 6px; }
.g-fill { margin-left: 21px; }
.sec .bw { width: 20px; }
.sec .bw2 { width: 19px; }
.sec .bw3 { width: 30px; }
.spacing { display: grid; grid-template-columns: 118px 1fr; margin-top: 3px; }
.lbl { line-height: 17px; height: 17px; color: #222; }
.col .grp { height: 31px; }
.spins { display: grid; grid-template-columns: 118px 1fr; margin-top: 11px; row-gap: 8px; }
.spinrow { display: flex; align-items: center; height: 23px; gap: 1px; }
.sr-last { margin-top: 1px; }
.spin { display: flex; height: 23px; background: #fff; border: 1px solid #a9a9a9; flex: none; }
.spin .ctext { line-height: 20px; }
.s-l { width: 91px; }
.s-r { width: 85px; }
.sbtn { width: 15px; margin: 1px; display: flex; flex-direction: column; background: #e8e8e8; border: 1px solid #c8c8c8; }
.sbtn i { flex: 1; font-style: normal; font-size: 6px; line-height: 9px; text-align: center; color: #222; }
.g-lsp { height: 31px; margin-top: 6px; }

.tabbar { flex: 1; display: flex; flex-direction: column; align-items: center; padding-top: 9px; }
.t-menu { width: 14px; height: 14px; flex: none; margin-left: 2px; }
.t-sep { width: 24px; height: 1px; background: #dfe1e3; margin: 13px 0 4px; flex: none; }
.tab { width: 32px; height: 32px; flex: none; display: flex; align-items: center; justify-content: center; margin-bottom: 3px; }
.active { border: 1px solid #a8a8a8; border-radius: 4px; background: #fafafa; margin-bottom: 4px; }
.t-i { width: 26px; height: 26px; display: block; }

.statusbar { height: 22px; flex: none; display: flex; align-items: center; background: #efefef; padding-top: 1px; }
.cell { height: 16px; line-height: 16px; flex: none; border-left: 1px solid #a3a3a3; display: flex; align-items: center; white-space: nowrap; }
.st-page { width: 249px; border-left: 0; padding-left: 10px; }
.st-style { width: 231px; padding-left: 5px; }
.st-lang { width: 234px; justify-content: center; padding-right: 4px; }
.st-ins { width: 45px; padding-left: 3px; }
.st-std { width: 34px; padding-left: 5px; }
.st-e1 { width: 16px; }
.st-e2 { width: 29px; }
.st-fill { width: 322px; }
.st-view { width: 75px; padding-left: 4px; }
.v1 { width: 16px; height: 16px; margin-left: 1px; }
.v2 { width: 20px; height: 16px; margin-left: 4px; }
.v3 { width: 22px; height: 16px; margin-left: 4px; }
.st-zoom { width: 144px; padding-left: 4px; }
.z { width: 14px; height: 14px; flex: none; }
.slider { width: 98px; height: 14px; margin: 0 3px; flex: none; }
.st-pct { padding-left: 4px; }
```
